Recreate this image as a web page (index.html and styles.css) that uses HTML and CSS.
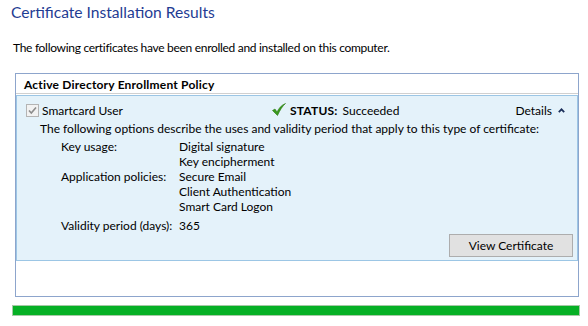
FILE: index.html
```html
<!DOCTYPE html>
<html>
<head>
<meta charset="utf-8">
<link rel="stylesheet" href="styles.css">
</head>
<body>
<div class="page">
  <h1 class="title">Certificate Installation Results</h1>
  <p class="intro">The following certificates have been enrolled and installed on this computer.</p>
  <section class="card">
    <div class="card-head">Active Directory Enrollment Policy</div>
    <div class="item">
      <div class="item-top">
        <div class="cb">
          <span class="box"><svg width="11" height="11" viewBox="0 0 11 11"><path d="M2 5.5 L4.3 8 L9 2.5" fill="none" stroke="#8c8c8c" stroke-width="1.6"/></svg></span>
          <span>Smartcard User</span>
        </div>
        <div class="status">
          <svg class="tick" width="14" height="13" viewBox="0 0 14 13"><path d="M0.5 7.5 L3 6 L5 9 C7 5 9.5 2 13.5 0.5 C10.5 3 8 7 5.5 12.5 Z" fill="#3a9a1e" stroke="#2a7a12" stroke-width="0.6" stroke-linejoin="round"/></svg>
          <b>STATUS:</b>
          <span>Succeeded</span>
        </div>
        <div class="details">Details <svg width="7" height="5" viewBox="0 0 7 5"><path d="M0.8 4.2 L3.5 1.3 L6.2 4.2" fill="none" stroke="#1b2f5a" stroke-width="1.7"/></svg></div>
      </div>
      <p class="desc">The following options describe the uses and validity period that apply to this type of certificate:</p>
      <div class="props">
        <span>Key usage:</span><span>Digital signature</span>
        <span></span><span>Key encipherment</span>
        <span>Application policies:</span><span>Secure Email</span>
        <span></span><span>Client Authentication</span>
        <span></span><span>Smart Card Logon</span>
        <span class="gap">Validity period (days):</span><span class="gap">365</span>
      </div>
      <div class="actions"><button class="btn">View Certificate</button></div>
    </div>
  </section>
  <div class="progress"><div class="fill"></div></div>
</div>
</body>
</html>
```
FILE: styles.css
```css
* { box-sizing: border-box; }
html, body { margin: 0; padding: 0; background: #fff; }
body { font-family: Lato, "Open Sans", sans-serif; font-size: 12px; color: #000; }
.page { width: 588px; height: 326px; overflow: hidden; }
.title {
  margin: 2px 0 0 11px;
  font-size: 15.6px;
  line-height: 20px;
  font-weight: normal;
  color: #1f3c93;
}
.intro { margin: 18px 0 0 13px; line-height: 15px; letter-spacing: -0.3px; }
.card {
  margin: 18px 0 0 15px;
  width: 564px;
  border: 1px solid #8da5cc;
  padding-bottom: 35px;
}
.card-head {
  height: 20px;
  padding: 3px 0 0 8px;
  line-height: 15px;
  font-weight: bold;
  letter-spacing: 0.2px;
  border-bottom: 1px solid #d0d0d0;
}
.item {
  margin-top: 1px;
  background: #e4f2fa;
  border: 1px solid #9cc6e5;
  padding: 7px 4px 3px 9px;
}
.item-top {
  display: grid;
  grid-template-columns: 246px auto 1fr;
  align-items: center;
  height: 15px;
  line-height: 15px;
}
.cb { display: flex; align-items: center; gap: 3px; }
.box {
  width: 13px; height: 13px;
  border: 1px solid #b4b4b4;
  background: #f2f2f2;
  display: flex; align-items: center; justify-content: center;
}
.status { display: flex; align-items: center; }
.status .tick { margin-right: 4px; margin-top: -2px; }
.status b { margin-right: 5px; letter-spacing: 0.2px; }
.details { justify-self: end; margin-right: 8px; display: flex; align-items: center; gap: 6px; }
.desc { margin: 3px 0 0 14px; line-height: 15px; }
.props {
  margin: 3px 0 0 35px;
  display: grid;
  grid-template-columns: 118px auto;
  line-height: 15px;
}
.props .gap { margin-top: 4px; }
.actions { display: flex; justify-content: flex-end; margin-top: 1px; }
.btn {
  width: 124px; height: 23px;
  background: #e1e1e1;
  border: 1px solid #adadad;
  border-radius: 0;
  font-family: inherit;
  font-size: 12px;
  color: #000;
  padding: 0;
}
.progress {
  margin: 8px 0 0 12px;
  width: 568px;
  height: 11px;
  border: 1px solid #a6c9a6;
  background: #e6e6e6;
}
.fill { height: 100%; width: 100%; background: #06b025; }
```
